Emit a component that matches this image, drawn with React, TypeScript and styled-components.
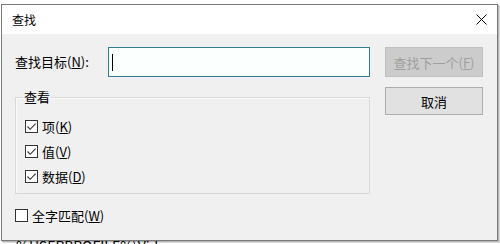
import styled, { createGlobalStyle } from "styled-components";

const GlobalStyle = createGlobalStyle`
  html, body {
    margin: 0;
    padding: 0;
    background: #ffffff;
    overflow: hidden;
  }
  * {
    box-sizing: border-box;
  }
`;

const FONT = `"Noto Sans CJK SC", "Liberation Sans", sans-serif`;

const Page = styled.div`
  width: 500px;
  height: 244px;
  padding: 4px 0 0 1px;
  overflow: hidden;
  font-family: ${FONT};
  color: #000000;
`;

const Dialog = styled.div`
  display: flex;
  flex-direction: column;
  width: 497px;
  height: 237px;
  border: 1px solid #7a7a7a;
  box-shadow: 1px 1px 0 #b4b4b4, 2px 2px 0 #dcdcdc;
  background: #f0f0f0;
`;

const TitleBar = styled.div`
  display: flex;
  align-items: center;
  justify-content: space-between;
  height: 29px;
  padding: 0 10px 0 10px;
  background: #ffffff;
  font-size: 12px;
`;

const Body = styled.div`
  display: grid;
  grid-template-columns: 355px 98px;
  column-gap: 15px;
  padding: 13px 13px 0 13px;
`;

const LeftCol = styled.div`
  display: flex;
  flex-direction: column;
`;

const RightCol = styled.div`
  display: flex;
  flex-direction: column;
  gap: 10px;
`;

const FindRow = styled.div`
  display: flex;
  align-items: center;
  height: 30px;
`;

const Label = styled.span`
  width: 93px;
  font-size: 13px;
  line-height: 16px;
`;

const InputBox = styled.div`
  display: flex;
  align-items: center;
  flex: 1;
  height: 30px;
  padding-left: 3px;
  border: 1px solid #2f7f8e;
  background: #fbfffe;
`;

const Caret = styled.span`
  width: 1px;
  height: 17px;
  background: #000000;
`;

const GroupBox = styled.fieldset`
  margin: 12px 0 0 0;
  padding: 0 0 6px 9px;
  height: 105px;
  border: 1px solid #d9d9d9;
  box-shadow: inset 1px 1px 0 #fafafa;
  min-width: 0;
`;

const Legend = styled.legend`
  margin-left: -2px;
  padding: 0 1px;
  font-size: 13px;
  line-height: 16px;
`;

const CheckList = styled.div`
  display: flex;
  flex-direction: column;
  padding-top: 9px;
`;

const CheckRow = styled.div<{ $indent?: number }>`
  display: flex;
  align-items: center;
  height: 25px;
  font-size: 13px;
  margin-left: ${(p) => p.$indent ?? 0}px;
`;

const Box = styled.span`
  display: flex;
  align-items: center;
  justify-content: center;
  width: 13px;
  height: 13px;
  margin-right: 4px;
  border: 1px solid #333333;
  background: #ffffff;
`;

const WholeWord = styled.div`
  margin-top: 9px;
`;

const Button = styled.div<{ $disabled?: boolean }>`
  display: flex;
  align-items: center;
  justify-content: center;
  height: ${(p) => (p.$disabled ? 30 : 28)}px;
  font-size: 13px;
  border: 1px solid ${(p) => (p.$disabled ? "#bfbfbf" : "#adadad")};
  background: ${(p) => (p.$disabled ? "#cccccc" : "#e1e1e1")};
  color: ${(p) => (p.$disabled ? "#9f9f9f" : "#000000")};
`;

const Peek = styled.div`
  height: 3px;
  overflow: hidden;
  padding-left: 15px;
  font-family: ${FONT};
  font-size: 14px;
  line-height: 14px;
`;

const PeekText = styled.div`
  margin-top: -2px;
`;

const Check = ({ on }: { on: boolean }) => (
  <Box>
    {on && (
      <svg width="11" height="11" viewBox="0 0 11 11">
        <path d="M1.5 5.5 L4.2 8.3 L9.6 2.6" fill="none" stroke="#333" strokeWidth="1.1" />
      </svg>
    )}
  </Box>
);

const App = () => {
  return (
    <>
      <GlobalStyle />
      <Page>
        <Dialog>
          <TitleBar>
            <span>查找</span>
            <svg width="11" height="11" viewBox="0 0 11 11">
              <path d="M0.5 0.5 L10.5 10.5 M10.5 0.5 L0.5 10.5" stroke="#000" strokeWidth="1" />
            </svg>
          </TitleBar>
          <Body>
            <LeftCol>
              <FindRow>
                <Label>
                  查找目标(<u>N</u>):
                </Label>
                <InputBox>
                  <Caret />
                </InputBox>
              </FindRow>
              <GroupBox>
                <Legend>查看</Legend>
                <CheckList>
                  <CheckRow>
                    <Check on />
                    项(<u>K</u>)
                  </CheckRow>
                  <CheckRow>
                    <Check on />
                    值(<u>V</u>)
                  </CheckRow>
                  <CheckRow>
                    <Check on />
                    数据(<u>D</u>)
                  </CheckRow>
                </CheckList>
              </GroupBox>
              <WholeWord>
                <CheckRow>
                  <Check on={false} />
                  全字匹配(<u>W</u>)
                </CheckRow>
              </WholeWord>
            </LeftCol>
            <RightCol>
              <Button $disabled>
                查找下一个(<u>F</u>)
              </Button>
              <Button>取消</Button>
            </RightCol>
          </Body>
        </Dialog>
        <Peek>
          <PeekText>%USERPROFILE%\Videos</PeekText>
        </Peek>
      </Page>
    </>
  );
};

export default App;
